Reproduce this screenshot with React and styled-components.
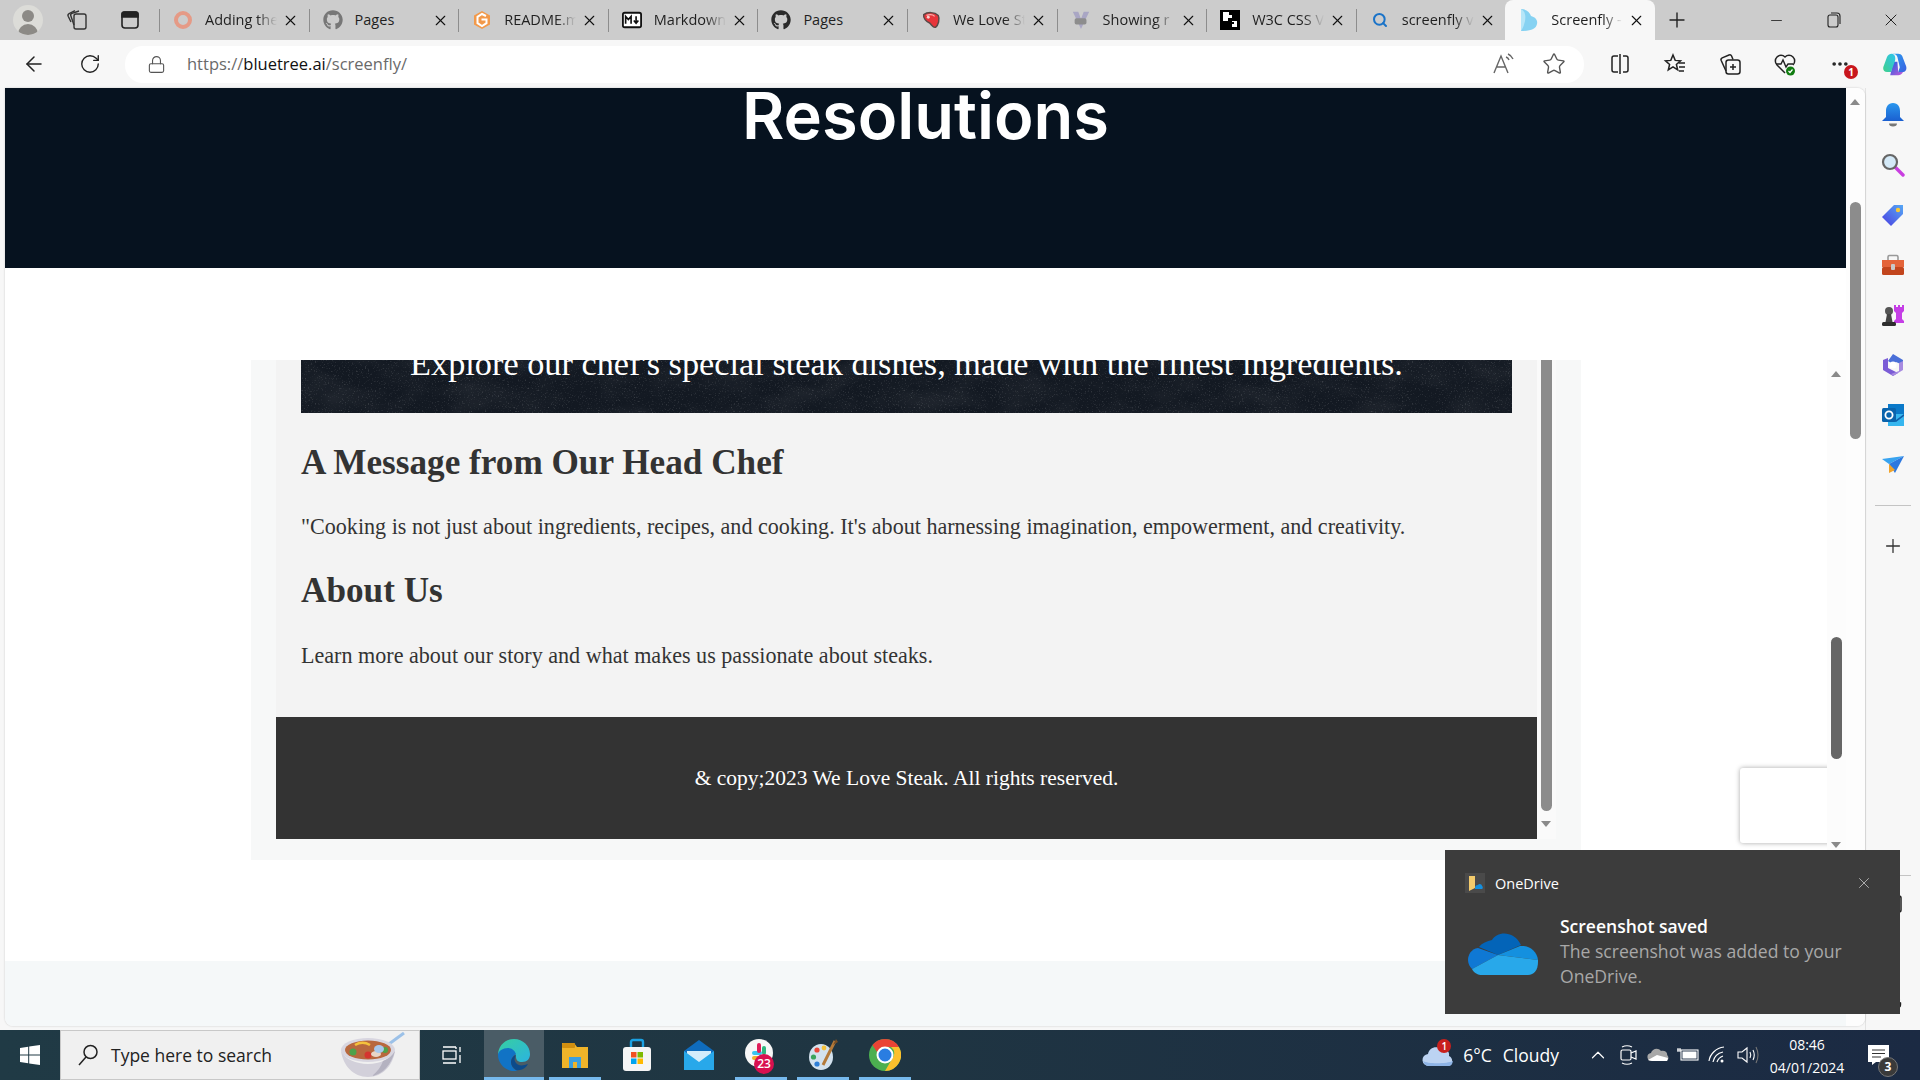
import React from 'react';
import styled, { createGlobalStyle } from 'styled-components';
import { FaGithub } from 'react-icons/fa';
import { ArrowLeft, RotateCw, Lock, Star, X, Plus, Minus, Search, ChevronUp, MoreHorizontal } from 'lucide-react';

const GlobalStyle = createGlobalStyle`
  html, body {
    margin: 0;
    padding: 0;
    width: 1920px;
    height: 1080px;
    overflow: hidden;
    font-family: 'Open Sans', 'Noto Sans', sans-serif;
  }
  * { box-sizing: border-box; }
`;

const Screen = styled.div`
  position: relative;
  display: flex;
  flex-direction: column;
  width: 1920px;
  height: 1080px;
  background: #f7f7f7;
  overflow: hidden;
`;

/* ---- browser tab strip ---- */
const TabStrip = styled.div`
  display: flex;
  align-items: stretch;
  height: 40px;
  background: #cccccc;
  flex-shrink: 0;
`;

const StripStart = styled.div`
  display: flex;
  align-items: center;
  width: 159px;
  padding-left: 13px;
  gap: 22px;
`;

const Avatar = styled.div`
  position: relative;
  width: 30px;
  height: 30px;
  border-radius: 50%;
  background: #dcdcd8;
  overflow: hidden;
  &::before {
    content: '';
    position: absolute;
    left: 9px;
    top: 5px;
    width: 12px;
    height: 12px;
    border-radius: 50%;
    background: #8c8a86;
  }
  &::after {
    content: '';
    position: absolute;
    left: 5px;
    top: 19px;
    width: 20px;
    height: 14px;
    border-radius: 10px 10px 0 0;
    background: #8c8a86;
  }
`;

const StripButton = styled.div`
  display: flex;
  align-items: center;
  justify-content: center;
  width: 24px;
  height: 24px;
  margin-left: ${({ $gap }) => $gap || 0}px;
`;

const Tab = styled.div`
  position: relative;
  display: flex;
  align-items: center;
  width: 149.6px;
  height: 40px;
  padding-left: 14px;
  font-size: 14.5px;
  color: #1f1f1f;
  &::before {
    content: '';
    display: ${({ $active }) => ($active ? 'none' : 'block')};
    position: absolute;
    left: 0;
    top: 9px;
    width: 1px;
    height: 23px;
    background: #8d8d8d;
  }
  ${({ $active }) =>
    $active &&
    `
    background: #f7f7f7;
    border-radius: 8px 8px 0 0;
  `}
`;

const TabIcon = styled.div`
  display: flex;
  align-items: center;
  justify-content: center;
  width: 20px;
  height: 20px;
  margin-right: 12px;
  flex-shrink: 0;
`;

const TabTitle = styled.div`
  width: 72px;
  margin: 0 5px 2px 0;
  white-space: nowrap;
  overflow: hidden;
  flex-shrink: 0;
  -webkit-mask-image: ${({ $fade }) =>
    $fade ? 'linear-gradient(to right, #000 72%, transparent 100%)' : 'none'};
  mask-image: ${({ $fade }) =>
    $fade ? 'linear-gradient(to right, #000 72%, transparent 100%)' : 'none'};
`;

const NewTab = styled.div`
  display: flex;
  align-items: center;
  justify-content: center;
  width: 44px;
`;

const WindowButtons = styled.div`
  display: flex;
  align-items: center;
  margin-left: auto;
`;

const WindowButton = styled.div`
  display: flex;
  align-items: center;
  justify-content: center;
  width: 57.5px;
  height: 40px;
`;

/* ---- address bar ---- */
const Toolbar = styled.div`
  display: flex;
  align-items: center;
  height: 48px;
  padding-left: 22px;
  flex-shrink: 0;
  background: #f7f7f7;
`;

const NavButton = styled.div`
  display: flex;
  align-items: center;
  justify-content: center;
  width: 24px;
  height: 24px;
  margin-right: ${({ $mr }) => $mr || 0}px;
`;

const AddressBar = styled.div`
  display: flex;
  align-items: center;
  width: 1459px;
  height: 37px;
  padding-left: 22px;
  background: #ffffff;
  border-radius: 18px;
  font-size: 16.5px;
  line-height: 35px;
  color: #6a6a6a;
  flex-shrink: 0;
`;

const LockWrap = styled.div`
  display: flex;
  width: 20px;
  margin-right: 20px;
  color: #555;
`;

const UrlText = styled.div`
  margin-bottom: 2px;
`;

const UrlHost = styled.span`
  color: #111111;
`;

const BarEnd = styled.div`
  display: flex;
  align-items: center;
  gap: 26px;
  margin-left: auto;
  padding-right: 18px;
`;

const ToolIcons = styled.div`
  display: flex;
  align-items: center;
  padding-left: 24px;
  gap: 31px;
`;

const ToolIcon = styled.div`
  position: relative;
  display: flex;
  align-items: center;
  justify-content: center;
  width: 24px;
  height: 24px;
`;

const AlertDot = styled.div`
  position: absolute;
  right: -6px;
  bottom: -3px;
  width: 14px;
  height: 14px;
  border-radius: 50%;
  background: #c8161d;
  color: #fff;
  font-size: 10px;
  font-weight: 700;
  line-height: 14px;
  text-align: center;
`;

/* ---- page ---- */
const Middle = styled.div`
  display: flex;
  flex: 1;
  min-height: 0;
`;

const Viewport = styled.div`
  position: relative;
  width: 1860px;
  height: 938px;
  margin-left: 5px;
  background: #ffffff;
  border-radius: 0 8px 8px 8px;
  box-shadow: 0 0 2px rgba(0, 0, 0, 0.22);
  overflow: hidden;
`;

const DarkHeader = styled.div`
  width: 1841px;
  height: 180px;
  background: #06121f;
  text-align: center;
  overflow: hidden;
`;

const HeaderTitle = styled.h1`
  margin: -10px 0 0;
  font-family: Inter, 'Liberation Sans', sans-serif;
  font-size: 65px;
  font-weight: 600;
  line-height: 76px;
  color: #ffffff;
`;

const FrameRow = styled.div`
  width: 1841px;
  height: 693px;
  padding: 92px 0 0 246px;
`;

const PaleBand = styled.div`
  width: 1841px;
  height: 65px;
  background: #f5f8f9;
`;

const Frame = styled.div`
  display: flex;
  width: 1330px;
  height: 500px;
  padding-left: 25px;
  background: #f7f8f8;
`;

const FrameInner = styled.div`
  display: flex;
  flex-direction: column;
  width: 1261px;
  height: 479px;
  background: #f3f3f3;
  font-family: 'Liberation Serif', 'Times New Roman', serif;
  overflow: hidden;
`;

const Hero = styled.div`
  position: relative;
  height: 53px;
  margin: 0 25px;
  background: #131922;
  overflow: hidden;
  flex-shrink: 0;
  text-align: center;
`;

const NoiseLayer = styled.svg`
  position: absolute;
  left: 0;
  top: 0;
  width: 100%;
  height: 100%;
`;

const HeroText = styled.div`
  position: relative;
  margin-top: -17px;
  font-size: 34.3px;
  line-height: 40px;
  color: #ffffff;
  white-space: nowrap;
`;

const SectionTitle = styled.h2`
  margin: ${({ $top }) => $top}px 25px ${({ $bottom }) => $bottom}px;
  font-size: 35.2px;
  font-weight: 700;
  line-height: 40px;
  color: #333333;
`;

const SectionText = styled.p`
  margin: 0 25px;
  font-size: 22.1px;
  line-height: 30px;
  color: #333333;
  white-space: nowrap;
`;

const FrameFooter = styled.div`
  margin-top: auto;
  height: 122px;
  flex-shrink: 0;
  background: #333333;
  color: #ffffff;
  font-size: 21.5px;
  line-height: 122px;
  text-align: center;
`;

const FrameScroll = styled.div`
  position: relative;
  width: 19px;
  height: 479px;
  background: #fafafa;
`;

const Thumb = styled.div`
  position: absolute;
  left: ${({ $left }) => $left}px;
  top: ${({ $top }) => $top}px;
  width: 11px;
  height: ${({ $height }) => $height}px;
  border-radius: ${({ $flat }) => ($flat ? '0 0 6px 6px' : '6px')};
  background: ${({ $color }) => $color};
`;

const Arrow = styled.div`
  position: absolute;
  left: ${({ $left }) => $left}px;
  top: ${({ $top }) => $top}px;
  width: 0;
  height: 0;
  border-left: 5.5px solid transparent;
  border-right: 5.5px solid transparent;
  ${({ $down }) =>
    $down ? 'border-top: 6px solid #8a8a8a;' : 'border-bottom: 6px solid #8a8a8a;'}
`;

const PageScroll = styled.div`
  position: absolute;
  right: 0;
  top: 0;
  width: 19px;
  height: 938px;
  background: #fdfdfd;
`;

const InnerPageScroll = styled.div`
  position: absolute;
  left: 1822px;
  top: 272px;
  width: 19px;
  height: 500px;
  background: #fcfcfc;
`;

const Captcha = styled.div`
  position: absolute;
  left: 1735px;
  top: 680px;
  width: 92px;
  height: 75px;
  background: #ffffff;
  border-radius: 3px 0 0 3px;
  box-shadow: 0 0 5px rgba(0, 0, 0, 0.35);
`;

/* ---- edge sidebar ---- */
const Sidebar = styled.div`
  display: flex;
  flex-direction: column;
  align-items: center;
  width: 55px;
  padding: 2px 0 0;
  background: #f7f7f7;
  border-left: 1px solid #e3e3e3;
`;

const SideItem = styled.div`
  display: flex;
  align-items: center;
  justify-content: center;
  width: 54px;
  height: 50px;
  margin-top: ${({ $mt }) => $mt || 0}px;
  flex-shrink: 0;
`;

const SideRule = styled.div`
  width: 36px;
  height: 1px;
  margin: ${({ $m }) => $m};
  background: #c4c4c4;
  flex-shrink: 0;
`;

const SideBottom = styled.div`
  display: flex;
  flex-direction: column;
  align-items: center;
  margin-top: 304px;
`;

/* ---- windows toast ---- */
const Toast = styled.div`
  position: absolute;
  left: 1445px;
  top: 850px;
  width: 455px;
  height: 164px;
  background: #3c3c3c;
  color: #ffffff;
  padding: 23px 20px 0;
`;

const ToastHead = styled.div`
  display: flex;
  align-items: center;
  height: 20px;
  font-size: 14.5px;
`;

const ToastLogo = styled.div`
  display: flex;
  align-items: center;
  justify-content: center;
  width: 20px;
  height: 20px;
  margin-right: 10px;
  background: #4a4a4a;
`;

const ToastClose = styled.div`
  display: flex;
  margin-left: auto;
  margin-right: 7px;
  color: #c4c4c4;
`;

const ToastBody = styled.div`
  display: flex;
  margin-top: 21px;
`;

const ToastCloud = styled.div`
  width: 95px;
  padding: 16px 0 0 3px;
  flex-shrink: 0;
`;

const ToastTitle = styled.div`
  font-size: 17.5px;
  font-weight: 600;
  line-height: 25px;
`;

const ToastText = styled.div`
  width: 300px;
  font-size: 17.6px;
  line-height: 25px;
  color: #a8a8a8;
`;

/* ---- windows taskbar ---- */
const Taskbar = styled.div`
  display: flex;
  align-items: stretch;
  height: 50px;
  flex-shrink: 0;
  background: linear-gradient(to right, #203a45 0%, #1f3542 45%, #1b2a43 100%);
  color: #ffffff;
`;

const StartButton = styled.div`
  display: flex;
  align-items: center;
  justify-content: center;
  width: 60px;
`;

const SearchBox = styled.div`
  display: flex;
  align-items: center;
  width: 360px;
  padding-left: 16px;
  background: #f0f0f0;
  border: 1px solid #c8c8c8;
  color: #222222;
  font-size: 17.5px;
`;

const SearchLabel = styled.span`
  margin-left: 12px;
`;

const SearchArt = styled.div`
  display: flex;
  margin-left: auto;
  margin-right: 11px;
`;

const TaskView = styled.div`
  display: flex;
  align-items: center;
  justify-content: center;
  width: 64px;
`;

const AppSlot = styled.div`
  position: relative;
  display: flex;
  align-items: center;
  justify-content: center;
  width: ${({ $w }) => $w || 62}px;
  background: ${({ $focus }) => ($focus ? '#4a5c66' : 'transparent')};
  &::after {
    content: '';
    display: ${({ $open }) => ($open ? 'block' : 'none')};
    position: absolute;
    left: ${({ $focus }) => ($focus ? 0 : '5px')};
    right: ${({ $focus }) => ($focus ? 0 : '5px')};
    bottom: 0;
    height: 3px;
    background: #76b9ed;
  }
`;

const Tray = styled.div`
  display: flex;
  align-items: center;
  margin-left: auto;
`;

const Weather = styled.div`
  position: relative;
  display: flex;
  align-items: center;
  font-size: 17.5px;
  margin-right: 24px;
  gap: 9px;
`;

const CloudBadge = styled.div`
  position: absolute;
  left: 15px;
  top: -4px;
  width: 14px;
  height: 14px;
  border-radius: 50%;
  background: #c8201d;
  font-size: 10px;
  font-weight: 600;
  line-height: 14px;
  text-align: center;
`;

const WeatherWords = styled.span`
  display: flex;
  gap: 11px;
`;

const TrayIcon = styled.div`
  display: flex;
  align-items: center;
  justify-content: center;
  width: 30px;
`;

const Clock = styled.div`
  width: 92px;
  margin: 2px 0 0 -2px;
  font-size: 14px;
  line-height: 23px;
  text-align: center;
`;

const Notice = styled.div`
  position: relative;
  display: flex;
  align-items: center;
  justify-content: center;
  width: 40px;
  margin: 0 21px 0 6px;
`;

const NoticeCount = styled.div`
  position: absolute;
  left: 19px;
  top: 12px;
  width: 20px;
  height: 20px;
  border-radius: 50%;
  background: #3a3a3a;
  border: 1px solid #777;
  font-size: 12px;
  font-weight: 700;
  line-height: 18px;
  text-align: center;
`;

const SlackCount = styled.div`
  position: absolute;
  left: 24px;
  top: 24px;
  width: 20px;
  height: 20px;
  border-radius: 50%;
  background: #d8104f;
  font-size: 12px;
  font-weight: 600;
  line-height: 20px;
  text-align: center;
`;

/* ---- drawn icons ---- */
const WorkspaceIcon = () => (
  <svg width="24" height="24" viewBox="0 0 24 24" fill="none" stroke="#333" strokeWidth="1.4">
    <rect x="9" y="6" width="12" height="15" rx="2" />
    <path d="M9 17 5.8 7.8a2 2 0 0 1 1.2-2.5L14 3" />
    <path d="M6 14 3.2 8.2a2 2 0 0 1 .9-2.6L10 2.6" />
  </svg>
);

const TabsIcon = () => (
  <svg width="22" height="22" viewBox="0 0 22 22" fill="none" stroke="#222" strokeWidth="1.6">
    <rect x="3" y="3" width="16" height="16" rx="3" />
    <path d="M3 5a2 2 0 0 1 2-2h12a2 2 0 0 1 2 2v3H3z" fill="#222" />
  </svg>
);

const RingFavicon = () => (
  <svg width="20" height="20" viewBox="0 0 20 20">
    <circle cx="10" cy="10" r="7" fill="none" stroke="#e59a86" strokeWidth="4" />
  </svg>
);

const OrangeFavicon = () => (
  <svg width="20" height="20" viewBox="0 0 20 20">
    <path d="M10 1 18 5.5v9L10 19l-8-4.5v-9z" fill="#f2994a" />
    <path d="M14 6 10 4 5.5 6.8v6.4L10 16l4.5-2.8V9.5H9.5" fill="none" stroke="#fff" strokeWidth="2" />
  </svg>
);

const MarkdownFavicon = () => (
  <svg width="22" height="18" viewBox="0 0 22 18">
    <rect x="1" y="1" width="20" height="16" rx="2" fill="#fff" stroke="#111" strokeWidth="2" />
    <path d="M4 13V5l3 3.5L10 5v8M15.5 5v7M13 9.5l2.5 3 2.5-3" fill="none" stroke="#111" strokeWidth="1.8" />
  </svg>
);

const SteakFavicon = () => (
  <svg width="22" height="22" viewBox="0 0 22 22">
    <path d="M3 5c4-3 12-3 16 1 2 4 0 11-3 13-3 1-4-3-7-5-3-1-7-5-6-9z" fill="#e8343a" stroke="#5a4a48" strokeWidth="1.6" />
    <path d="M6 6c3-1 7-1 9 1" fill="none" stroke="#f9b0ad" strokeWidth="1.4" />
    <circle cx="8" cy="8" r="1.6" fill="#f6d3d0" />
  </svg>
);

const VueFavicon = () => (
  <svg width="22" height="22" viewBox="0 0 22 22">
    <path d="M2 2h6l3 8 3-8h6l-9 19z" fill="#a9a6c4" />
    <rect x="4" y="9" width="13" height="7" rx="2" fill="#8d8d8d" />
  </svg>
);

const W3cFavicon = () => (
  <svg width="20" height="20" viewBox="0 0 20 20">
    <rect width="20" height="20" fill="#000" />
    <path d="M3 2h6v3h3v3H8v3H3zM12 11h5v6h-5v-3h2v-2h-2z" fill="#fff" />
  </svg>
);

const ScreenflyFavicon = () => (
  <svg width="20" height="24" viewBox="0 0 20 24">
    <path d="M2 1c5 0 9 3 10 7 4 1 7 4 6 8-1 5-6 7-16 7z" fill="#86d2f2" />
    <path d="M2 1c4 2 5 7 4 12-1 4-2 7-4 10z" fill="#b6e6f8" />
  </svg>
);

const SplitIcon = () => (
  <svg width="24" height="24" viewBox="0 0 24 24" fill="none" stroke="#222" strokeWidth="1.5">
    <path d="M10 4H6a2 2 0 0 0-2 2v12a2 2 0 0 0 2 2h4M12 2v20M15 4h3a2 2 0 0 1 2 2v12a2 2 0 0 1-2 2h-3" />
  </svg>
);

const FavoritesIcon = () => (
  <svg width="24" height="24" viewBox="0 0 24 24" fill="none" stroke="#222" strokeWidth="1.5">
    <path d="M10 3l2.2 5.4 5.3.4-4.1 3.6 1.3 5.4-4.7-2.9-4.7 2.9 1.3-5.4L2.5 8.8l5.3-.4z" />
    <path d="M16 11h6M16 15h6M16 19h5" />
  </svg>
);

const CollectionsIcon = () => (
  <svg width="24" height="24" viewBox="0 0 24 24" fill="none" stroke="#222" strokeWidth="1.5">
    <rect x="8" y="8" width="14" height="14" rx="2.5" />
    <path d="M15 12v6M12 15h6" />
    <path d="M8 19 3.2 8.5a2 2 0 0 1 1-2.6L11 3a2 2 0 0 1 2.6 1L15 7.5" />
  </svg>
);

const HealthIcon = () => (
  <svg width="24" height="24" viewBox="0 0 24 24" fill="none">
    <path d="M12 21 4 13a5.5 5.5 0 0 1 8-8 5.5 5.5 0 0 1 8 8" stroke="#222" strokeWidth="1.5" />
    <path d="M3 12h5l2-4 3 7 2-3h5" stroke="#222" strokeWidth="1.4" />
    <circle cx="17.5" cy="19" r="4.5" fill="#107c10" />
    <path d="m15.5 19 1.5 1.5 2.5-3" stroke="#fff" strokeWidth="1.2" />
  </svg>
);

const CopilotIcon = () => (
  <svg width="30" height="27" viewBox="0 0 30 27">
    <defs>
      <linearGradient id="cpA" x1="0" y1="0" x2="1" y2="1">
        <stop offset="0" stopColor="#2aa0f0" />
        <stop offset="1" stopColor="#3a5fe0" />
      </linearGradient>
      <linearGradient id="cpB" x1="0" y1="1" x2="1" y2="0">
        <stop offset="0" stopColor="#3fd08a" />
        <stop offset="1" stopColor="#2ec4f0" />
      </linearGradient>
      <linearGradient id="cpC" x1="0" y1="0" x2="1" y2="1">
        <stop offset="0" stopColor="#1d5fe0" />
        <stop offset="1" stopColor="#c45ad8" />
      </linearGradient>
    </defs>
    <path d="M11 0h8c2 0 4 1 5 3l5 13c1 4-1 7-5 7h-5l2-6-3-13c-1-3-3-4-7-4z" fill="url(#cpA)" />
    <path d="M13 10 9 27h10c3 0 5-2 6-4h-6l-1-13z" fill="url(#cpC)" />
    <path d="M11 0C8 0 6 2 5 4L1 15c-2 4 0 8 4 8h5l5-14c1-4 0-9-4-9z" fill="url(#cpB)" />
  </svg>
);

const BellIcon = () => (
  <svg width="24" height="26" viewBox="0 0 24 26">
    <defs>
      <linearGradient id="bellG" x1="0" y1="0" x2="0" y2="1">
        <stop offset="0" stopColor="#2a97ee" />
        <stop offset="1" stopColor="#1a5fd0" />
      </linearGradient>
    </defs>
    <path d="M12 1c5 0 7 4 7 8v6l4 4H1l4-4V9c0-4 2-8 7-8z" fill="url(#bellG)" />
    <path d="M8 21.5h8a4 3 0 0 1-8 0z" fill="#777" />
  </svg>
);

const FindIcon = () => (
  <svg width="24" height="24" viewBox="0 0 24 24">
    <path d="m14 14 8 8" stroke="#c93ee0" strokeWidth="3.4" strokeLinecap="round" />
    <circle cx="9" cy="9" r="7" fill="#d4e9f7" stroke="#666" strokeWidth="2.2" />
  </svg>
);

const TagIcon = () => (
  <svg width="24" height="24" viewBox="0 0 24 24">
    <defs>
      <linearGradient id="tagG" x1="0" y1="1" x2="1" y2="0">
        <stop offset="0" stopColor="#4a3de0" />
        <stop offset="1" stopColor="#56a8f5" />
      </linearGradient>
    </defs>
    <path d="M13 2h9v9L10 23 1 14z" fill="url(#tagG)" />
    <circle cx="17" cy="7" r="2.2" fill="#f8c93a" />
  </svg>
);

const ToolboxIcon = () => (
  <svg width="24" height="22" viewBox="0 0 24 22">
    <path d="M7 6V3a1.5 1.5 0 0 1 1.5-1.5h7A1.5 1.5 0 0 1 17 3v3" fill="none" stroke="#999" strokeWidth="1.6" />
    <rect x="1" y="6" width="22" height="7" fill="#e4643a" />
    <rect x="1" y="13" width="22" height="8" rx="1.5" fill="#c2451d" />
    <rect x="10" y="10" width="4" height="6" rx="1" fill="#c9c9c9" />
  </svg>
);

const ChessIcon = () => (
  <svg width="24" height="24" viewBox="0 0 24 24">
    <path d="M13 2h2v2h2V2h2v2h2V2h2v6l-2 2v6l2 2v2H13v-2l2-2v-6l-2-2z" fill="#c53ee6" />
    <circle cx="8" cy="8" r="4" fill="#555" />
    <path d="M6 11h4l1.5 8h-7z" fill="#444" />
    <rect x="1" y="19" width="14" height="4" rx="1.5" fill="#2e2e2e" />
  </svg>
);

const M365Icon = () => (
  <svg width="24" height="24" viewBox="0 0 24 24">
    <path d="M12 1 22 7v5l-7-3-3 2-5-3z" fill="#4a6fd8" />
    <path d="M2 7l5-2v10l10 5-5 3-10-6z" fill="#7b5cd6" />
    <path d="M22 8v9l-10 6-2-2 8-3V10z" fill="#a78be0" />
    <circle cx="12" cy="12" r="3.5" fill="#fff" />
  </svg>
);

const OutlookIcon = () => (
  <svg width="24" height="24" viewBox="0 0 24 24">
    <rect x="7" y="1" width="16" height="12" fill="#0a79c9" />
    <path d="M7 11h16v12H7z" fill="#36b6ef" />
    <path d="m7 11 8 6 8-6v2l-8 6-8-6z" fill="#0f5ea8" />
    <rect x="1" y="5" width="14" height="14" rx="1.5" fill="#0a64ad" />
    <circle cx="8" cy="12" r="3.6" fill="none" stroke="#fff" strokeWidth="1.8" />
  </svg>
);

const SendIcon = () => (
  <svg width="24" height="20" viewBox="0 0 24 20">
    <path d="M1 4 23 1 8 9z" fill="#37a3f0" />
    <path d="M8 9 23 1l-9 17z" fill="#2c78e0" />
    <path d="M8 9v9l6-3z" fill="#f1a42b" />
  </svg>
);

const CloudLogo = ({ width, height }) => (
  <svg width={width} height={height} viewBox="0 0 70 46">
    <path d="M24 10C29 1 46 0 53 15L30 25 11 17c3-4 8-6 13-7z" fill="#0364b8" />
    <path d="M10 18C3 19 0 25 0 30c0 4 2 7 4 9l26-14z" fill="#0f78d4" />
    <path d="M52 16c9-1 17 5 18 14L30 25z" fill="#1490df" />
    <path d="M4 39c2 4 6 6 10 6h46c6 0 10-5 10-13 0-1 0-2 0-2L30 25z" fill="#28a8ea" />
  </svg>
);

const FolderBadge = () => (
  <svg width="16" height="16" viewBox="0 0 16 16">
    <path d="M2 1h6v12l-6 3z" fill="#f3cb6c" />
    <path d="M8 13c0-2 1-3 3-3 1-2 4-1 4 1 1 0 1 3 0 3H9c-1 0-1 0-1-1z" fill="#1490df" />
  </svg>
);

const WinLogo = () => (
  <svg width="20" height="20" viewBox="0 0 20 20" fill="#fff">
    <path d="M0 3 8.2 1.8v7.6H0zM9.2 1.6 20 0v9.4H9.2zM0 10.4h8.2v7.8L0 17zM9.2 10.4H20V20L9.2 18.4z" />
  </svg>
);

const SearchGlass = () => (
  <svg width="22" height="24" viewBox="0 0 22 24" fill="none" stroke="#222" strokeWidth="1.5">
    <circle cx="13.5" cy="9" r="6.5" />
    <path d="M9 14 2 22" />
  </svg>
);

const SoupBowl = () => (
  <svg width="70" height="46" viewBox="0 0 70 46">
    <path d="M40 20 66 1" stroke="#9cc1e8" strokeWidth="3" />
    <ellipse cx="30" cy="18" rx="27" ry="12" fill="#d8d6e0" />
    <ellipse cx="30" cy="18" rx="23" ry="9.5" fill="#b8683e" />
    <circle cx="15" cy="20" r="3.5" fill="#4ea24a" />
    <circle cx="30" cy="23" r="3.5" fill="#d5352f" />
    <circle cx="47" cy="18" r="3" fill="#4ea24a" />
    <path d="M17 13c5-3 10-3 15 0" stroke="#f4c23c" strokeWidth="2.6" fill="none" />
    <ellipse cx="38" cy="22" rx="5" ry="3" fill="#e9d5c6" />
    <ellipse cx="41" cy="17" rx="5" ry="4" fill="#a8c8ec" />
    <path d="M3 19c2 14 12 26 27 26s25-12 27-26c-4 8-15 13-27 13S7 27 3 19z" fill="#d2d0da" />
    <path d="M34 44c11-2 19-11 23-25-3 5-7 8-12 10-2 6-6 11-11 15z" fill="#b4b2c0" />
  </svg>
);

const TaskViewIcon = () => (
  <svg width="20" height="20" viewBox="0 0 20 20" fill="none" stroke="#fff" strokeWidth="1.3">
    <rect x="1" y="6" width="13" height="8" />
    <path d="M1 2h11M1 18h13M14 2v2M14 2h-2M18 2v5M18 10v8" />
  </svg>
);

const EdgeLogo = () => (
  <svg width="32" height="32" viewBox="0 0 32 32">
    <defs>
      <linearGradient id="edgeA" x1="0" y1="0" x2="1" y2="1">
        <stop offset="0" stopColor="#37cfa0" />
        <stop offset="1" stopColor="#2bb4e0" />
      </linearGradient>
    </defs>
    <path d="M16 0c9 0 16 7 16 15 0 5-3 8-8 8-4 0-6-2-6-5 0-4-3-7-8-7C5 11 2 13 0 16 0 7 7 0 16 0z" fill="url(#edgeA)" />
    <path d="M0 16c0-4 5-7 10-7 4 0 7 3 8 6-2 1-5 4-5 8 0 4 3 8 7 9-10 2-20-6-20-16z" fill="#1173c5" />
    <path d="M13 23c0 3 2 6 5 8 5 1 10-2 12-6-5 2-10 2-12-1-2-2-2-5 0-8-3 1-5 4-5 7z" fill="#0c4a8a" />
  </svg>
);

const ExplorerIcon = () => (
  <svg width="30" height="30" viewBox="0 0 30 30">
    <path d="M2 3h12l3 4h11v21H2z" fill="#f0b429" />
    <rect x="2" y="3" width="13" height="5" rx="1" fill="#d18f10" />
    <path d="M9 28V17h12v11h-4v-6h-4v6z" fill="#3b9fe0" />
  </svg>
);

const StoreIcon = () => (
  <svg width="30" height="34" viewBox="0 0 30 34">
    <path d="M9 9V4a2 2 0 0 1 2-2h8a2 2 0 0 1 2 2v5" fill="none" stroke="#1ba1e2" strokeWidth="2.4" />
    <rect x="1" y="9" width="28" height="24" rx="3" fill="#f5f5f5" />
    <rect x="9" y="14" width="5.5" height="5.5" fill="#f25022" />
    <rect x="15.5" y="14" width="5.5" height="5.5" fill="#7fba00" />
    <rect x="9" y="20.5" width="5.5" height="5.5" fill="#00a4ef" />
    <rect x="15.5" y="20.5" width="5.5" height="5.5" fill="#ffb900" />
  </svg>
);

const MailIcon = () => (
  <svg width="30" height="30" viewBox="0 0 30 30">
    <path d="M0 11 15 0l15 11v19H0z" fill="#0f6cbd" />
    <path d="M3 11h24v10l-12 6-12-6z" fill="#d4ecfb" />
    <path d="M0 11l15 11 15-11v19H0z" fill="#28a8ea" />
  </svg>
);

const SlackIcon = () => (
  <svg width="34" height="34" viewBox="0 0 34 34">
    <circle cx="15" cy="15" r="14" fill="#f7f7f7" />
    <rect x="8" y="13" width="10" height="4" rx="2" fill="#36c5f0" />
    <rect x="13" y="5" width="4" height="10" rx="2" fill="#e01e5a" />
    <rect x="18" y="8" width="4" height="9" rx="2" fill="#2eb67d" />
    <rect x="8" y="18" width="9" height="4" rx="2" fill="#ecb22e" />
  </svg>
);

const PaintIcon = () => (
  <svg width="32" height="32" viewBox="0 0 32 32">
    <ellipse cx="14" cy="18" rx="12" ry="13" fill="#d3e2ee" />
    <circle cx="10" cy="11" r="2.6" fill="#e8483a" />
    <circle cx="6.5" cy="18" r="2.6" fill="#3ba55d" />
    <circle cx="10" cy="25" r="2.6" fill="#2f7fd6" />
    <circle cx="17" cy="9" r="2.4" fill="#f4c23c" />
    <path d="M16 26 28 2" stroke="#b47a3a" strokeWidth="3" />
    <path d="M26 6 29 0l2 3z" fill="#7a4f25" />
  </svg>
);

const ChromeIcon = () => (
  <svg width="32" height="32" viewBox="0 0 32 32">
    <circle cx="16" cy="16" r="16" fill="#4caf50" />
    <path d="M16 0a16 16 0 0 1 13.9 8H16a8 8 0 0 0-7.6 5.4L3.4 6A16 16 0 0 1 16 0z" fill="#ea4335" />
    <path d="M29.9 8A16 16 0 0 1 16 32l7-12a8 8 0 0 0-1-12z" fill="#fbc02d" />
    <circle cx="16" cy="16" r="7.5" fill="#2a7de1" stroke="#fff" strokeWidth="2" />
  </svg>
);

const WeatherCloud = () => (
  <svg width="32" height="24" viewBox="0 0 32 24">
    <path d="M7 23a6 6 0 0 1-1-12c1-6 8-9 13-5 5-1 9 3 8 7 4 1 5 10-1 10z" fill="#bcd3f2" />
    <path d="M1 18c4 3 24 3 30 0-1 4-2 5-5 5H7c-3 0-5-2-6-5z" fill="#8eb4e6" />
  </svg>
);

const MeetIcon = () => (
  <svg width="20" height="22" viewBox="0 0 20 22" fill="none" stroke="#fff" strokeWidth="1.2">
    <rect x="3" y="6" width="10" height="10" rx="1.5" />
    <path d="m13 9 5-2v8l-5-2M4 3c3-1.5 7-1.5 10 0M4 19c3 1.5 7 1.5 10 0" />
  </svg>
);

const TrayCloud = () => (
  <svg width="22" height="14" viewBox="0 0 22 14">
    <path d="M5 13a4 4 0 0 1-1-8c1-4 7-6 10-2 4-1 7 2 6 4 2 1 2 6-1 6z" fill="#a8a8a8" />
    <path d="M1 12 10 7l11 3-1 3H5z" fill="#ffffff" />
  </svg>
);

const BatteryIcon = () => (
  <svg width="22" height="14" viewBox="0 0 22 14" fill="none" stroke="#fff" strokeWidth="1.1">
    <rect x="4" y="2" width="17" height="10" />
    <rect x="6" y="4" width="13" height="6" fill="#fff" />
    <path d="M0 2h4M1 0v4M3 0v4" />
  </svg>
);

const WifiIcon = () => (
  <svg width="20" height="18" viewBox="0 0 20 18" fill="none" stroke="#fff" strokeWidth="1.2">
    <path d="M1 15C2 8 8 2 16 1M5 16c1-5 5-9 10-10M9 16c1-3 3-5 6-6" />
    <circle cx="14" cy="15" r="1.5" fill="#fff" stroke="none" />
  </svg>
);

const VolumeIcon = () => (
  <svg width="22" height="18" viewBox="0 0 22 18" fill="none" stroke="#fff" strokeWidth="1.1">
    <path d="M1 6h4l5-4v14l-5-4H1z" />
    <path d="M13 6c1 2 1 4 0 6M16 4c1.5 3 1.5 7 0 10" />
    <path d="M19 1c2.5 5 2.5 11 0 16" stroke="#777" />
  </svg>
);

const NoticeIcon = () => (
  <svg width="22" height="20" viewBox="0 0 22 20">
    <path d="M0 0h21v17H8l-4 3v-3H0z" fill="#fff" />
    <path d="M4 5h13M4 8.5h13M4 12h9" stroke="#333" strokeWidth="1.2" />
  </svg>
);

// grainy texture of the hero picture, with a slower mottle under it
const HeroNoise = () => (
  <NoiseLayer>
    <filter id="mottle">
      <feTurbulence type="fractalNoise" baseFrequency="0.02 0.04" numOctaves="3" seed="3" />
      <feColorMatrix values="0 0 0 0 0.5  0 0 0 0 0.5  0 0 0 0 0.5  1.4 0 0 0 -0.55" />
    </filter>
    <filter id="grain">
      <feTurbulence type="fractalNoise" baseFrequency="0.7" numOctaves="2" seed="7" />
      <feColorMatrix values="0 0 0 0 0.62  0 0 0 0 0.62  0 0 0 0 0.62  1.8 0 0 0 -1.05" />
    </filter>
    <rect width="100%" height="100%" filter="url(#mottle)" opacity="0.1" />
    <rect width="100%" height="100%" filter="url(#grain)" opacity="0.4" />
  </NoiseLayer>
);

const tabs = [
  { title: 'Adding the', icon: <RingFavicon />, fade: true },
  { title: 'Pages', icon: <FaGithub size={20} color="#777" /> },
  { title: 'README.md', icon: <OrangeFavicon />, fade: true },
  { title: 'Markdown', icon: <MarkdownFavicon />, fade: true },
  { title: 'Pages', icon: <FaGithub size={20} color="#2b2b2b" /> },
  { title: 'We Love St', icon: <SteakFavicon />, fade: true },
  { title: 'Showing r', icon: <VueFavicon />, fade: true },
  { title: 'W3C CSS V', icon: <W3cFavicon />, fade: true },
  { title: 'screenfly v', icon: <Search size={16} color="#1a73c8" strokeWidth={3} />, fade: true },
  { title: 'Screenfly -', icon: <ScreenflyFavicon />, active: true, fade: true },
];

const sideIcons = [
  <BellIcon />,
  <FindIcon />,
  <TagIcon />,
  <ToolboxIcon />,
  <ChessIcon />,
  <M365Icon />,
  <OutlookIcon />,
  <SendIcon />,
];

const App = () => {
  return (
    <>
      <GlobalStyle />
      <Screen>
        <TabStrip>
          <StripStart>
            <Avatar />
            <StripButton><WorkspaceIcon /></StripButton>
            <StripButton $gap={7}><TabsIcon /></StripButton>
          </StripStart>
          {tabs.map((tab, index) => (
            <Tab key={index} $active={tab.active}>
              <TabIcon>{tab.icon}</TabIcon>
              <TabTitle $fade={tab.fade}>{tab.title}</TabTitle>
              <X size={17} color="#111" strokeWidth={1.6} />
            </Tab>
          ))}
          <NewTab><Plus size={24} color="#222" strokeWidth={1.4} /></NewTab>
          <WindowButtons>
            <WindowButton><Minus size={17} color="#222" strokeWidth={1.2} /></WindowButton>
            <WindowButton>
              <svg width="14" height="16" viewBox="0 0 14 16" fill="none" stroke="#222" strokeWidth="1.1">
                <rect x="1" y="3" width="10" height="12" rx="2" />
                <path d="M4 1h6a3 3 0 0 1 3 3v8" />
              </svg>
            </WindowButton>
            <WindowButton><X size={20} color="#222" strokeWidth={1.2} /></WindowButton>
          </WindowButtons>
        </TabStrip>

        <Toolbar>
          <NavButton $mr={32}><ArrowLeft size={24} color="#222" strokeWidth={1.5} /></NavButton>
          <NavButton $mr={23}><RotateCw size={22} color="#222" strokeWidth={1.5} /></NavButton>
          <AddressBar>
            <LockWrap><Lock size={19} strokeWidth={1.4} /></LockWrap>
            <UrlText>https://<UrlHost>bluetree.ai</UrlHost>/screenfly/</UrlText>
            <BarEnd>
              <svg width="24" height="24" viewBox="0 0 24 24" fill="none" stroke="#666" strokeWidth="1.4">
                <path d="M2 21 9 4l7 17M4.5 15h9" />
                <path d="M14 5c1.5.5 2.5 1.5 3 3M16 2c2.5 1 4 3 5 5" />
              </svg>
              <Star size={24} color="#555" strokeWidth={1.4} />
            </BarEnd>
          </AddressBar>
          <ToolIcons>
            <ToolIcon><SplitIcon /></ToolIcon>
            <ToolIcon><FavoritesIcon /></ToolIcon>
            <ToolIcon><CollectionsIcon /></ToolIcon>
            <ToolIcon><HealthIcon /></ToolIcon>
            <ToolIcon>
              <MoreHorizontal size={20} color="#222" strokeWidth={2.4} />
              <AlertDot>1</AlertDot>
            </ToolIcon>
            <ToolIcon><CopilotIcon /></ToolIcon>
          </ToolIcons>
        </Toolbar>

        <Middle>
          <Viewport>
            <DarkHeader>
              <HeaderTitle>Resolutions</HeaderTitle>
            </DarkHeader>
            <FrameRow>
              <Frame>
                <FrameInner>
                  <Hero>
                    <HeroNoise />
                    <HeroText>Explore our chef's special steak dishes, made with the finest ingredients.</HeroText>
                  </Hero>
                  <SectionTitle $top={30} $bottom={29}>A Message from Our Head Chef</SectionTitle>
                  <SectionText>"Cooking is not just about ingredients, recipes, and cooking. It's about harnessing imagination, empowerment, and creativity.</SectionText>
                  <SectionTitle $top={29} $bottom={30}>About Us</SectionTitle>
                  <SectionText>Learn more about our story and what makes us passionate about steaks.</SectionText>
                  <FrameFooter>&amp; copy;2023 We Love Steak. All rights reserved.</FrameFooter>
                </FrameInner>
                <FrameScroll>
                  <Thumb $left={4} $top={0} $height={451} $color="#8c8c8c" $flat />
                  <Arrow $left={4} $top={461} $down />
                </FrameScroll>
              </Frame>
            </FrameRow>
            <PaleBand />
            <Captcha />
            <InnerPageScroll>
              <Arrow $left={4} $top={11} />
              <Thumb $left={4} $top={277} $height={122} $color="#666666" />
              <Arrow $left={4} $top={482} $down />
            </InnerPageScroll>
            <PageScroll>
              <Arrow $left={4} $top={11} />
              <Thumb $left={4} $top={114} $height={237} $color="#8c8c8c" />
            </PageScroll>
          </Viewport>

          <Sidebar>
            {sideIcons.map((icon, index) => (
              <SideItem key={index}>{icon}</SideItem>
            ))}
            <SideRule $m="15px 0 15px" />
            <SideItem><Plus size={22} color="#333" strokeWidth={1.4} /></SideItem>
            <SideBottom>
              <SideRule $m="0 0 3px" />
              <SideItem><SplitIcon /></SideItem>
              <SideItem $mt={50}>
                <svg width="20" height="20" viewBox="0 0 20 20" fill="none" stroke="#222" strokeWidth="1.5">
                  <circle cx="10" cy="10" r="3" />
                  <circle cx="10" cy="10" r="7.5" strokeDasharray="3 2" />
                </svg>
              </SideItem>
            </SideBottom>
          </Sidebar>
        </Middle>

        <Taskbar>
          <StartButton><WinLogo /></StartButton>
          <SearchBox>
            <SearchGlass />
            <SearchLabel>Type here to search</SearchLabel>
            <SearchArt><SoupBowl /></SearchArt>
          </SearchBox>
          <TaskView><TaskViewIcon /></TaskView>
          <AppSlot $focus $open $w={60}><EdgeLogo /></AppSlot>
          <AppSlot $open><ExplorerIcon /></AppSlot>
          <AppSlot><StoreIcon /></AppSlot>
          <AppSlot><MailIcon /></AppSlot>
          <AppSlot $open>
            <SlackIcon />
            <SlackCount>23</SlackCount>
          </AppSlot>
          <AppSlot $open><PaintIcon /></AppSlot>
          <AppSlot $open><ChromeIcon /></AppSlot>
          <Tray>
            <Weather>
              <WeatherCloud />
              <CloudBadge>1</CloudBadge>
              <WeatherWords><span>6°C</span><span>Cloudy</span></WeatherWords>
            </Weather>
            <TrayIcon><ChevronUp size={22} color="#fff" strokeWidth={1.3} /></TrayIcon>
            <TrayIcon><MeetIcon /></TrayIcon>
            <TrayIcon><TrayCloud /></TrayIcon>
            <TrayIcon><BatteryIcon /></TrayIcon>
            <TrayIcon><WifiIcon /></TrayIcon>
            <TrayIcon><VolumeIcon /></TrayIcon>
            <Clock>08:46<br />04/01/2024</Clock>
            <Notice>
              <NoticeIcon />
              <NoticeCount>3</NoticeCount>
            </Notice>
          </Tray>
        </Taskbar>

        <Toast>
          <ToastHead>
            <ToastLogo><FolderBadge /></ToastLogo>
            OneDrive
            <ToastClose><X size={18} strokeWidth={1.1} /></ToastClose>
          </ToastHead>
          <ToastBody>
            <ToastCloud><CloudLogo width={70} height={46} /></ToastCloud>
            <div>
              <ToastTitle>Screenshot saved</ToastTitle>
              <ToastText>The screenshot was added to your OneDrive.</ToastText>
            </div>
          </ToastBody>
        </Toast>
      </Screen>
    </>
  );
};

export default App;
